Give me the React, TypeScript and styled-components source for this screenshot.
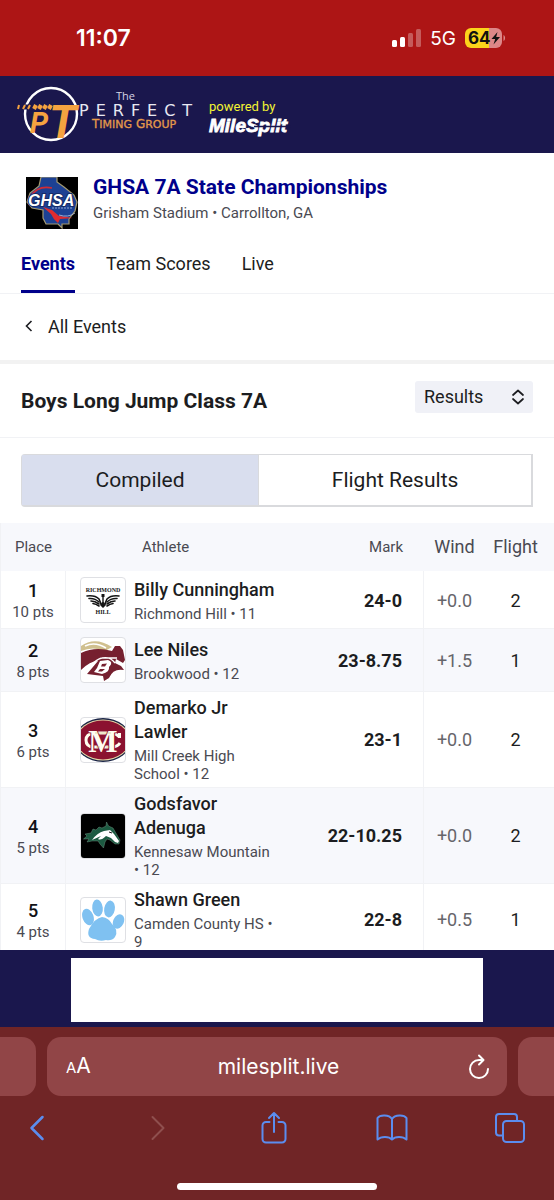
import React from 'react';
import styled, { createGlobalStyle, css } from 'styled-components';

const navy = '#1a174d';
const linkBlue = '#00008b';
const line = '#f1f2f5';
const muted = '#4a4a52';

const GlobalStyle = createGlobalStyle`
  * { box-sizing: border-box; }
  body { margin: 0; background: #fff; color: #1c1d21; font-family: Roboto, sans-serif; }
  button, select, input { font: inherit; color: inherit; margin: 0; border: 0; background: none; padding: 0; }
  a { color: inherit; text-decoration: none; }
  h1, h2, p { margin: 0; }
  svg { display: block; }
`;

const Shell = styled.div`
  height: 100vh;
  display: flex;
  flex-direction: column;
`;

const StatusBar = styled.div`
  flex: none;
  height: 76px;
  padding: 0 48px 0 76px;
  background: #ad1515;
  color: #fff;
  display: flex;
  align-items: center;
  justify-content: space-between;
  font-family: Inter, sans-serif;
`;

const Clock = styled.time`
  font-size: 23px;
  font-weight: 600;
`;

const StatusIcons = styled.div`
  display: flex;
  align-items: center;
  gap: 9px;
  font-size: 19px;
`;

const BrandBar = styled.header`
  flex: none;
  height: 77px;
  background: ${navy};
  display: flex;
  padding: 0 16px;
`;

const Main = styled.main`
  flex: 1;
  min-height: 0;
  overflow-y: auto;
  scrollbar-width: none;
`;

const MeetHeader = styled.section`
  display: flex;
  align-items: flex-start;
  gap: 15px;
  padding: 22px 26px 0;
  svg { margin-top: 2px; }
`;

const MeetTitle = styled.h1`
  font-size: 21px;
  line-height: 24px;
  font-weight: 700;
  color: ${linkBlue};
`;

const MeetPlace = styled.p`
  font-size: 15px;
  line-height: 20px;
  margin-top: 4px;
  color: ${muted};
`;

const Tabs = styled.nav`
  display: flex;
  gap: 31px;
  padding: 5px 21px 0;
  border-bottom: 1px solid ${line};
`;

const Tab = styled.a<{ $active?: boolean }>`
  font-size: 18px;
  line-height: 24px;
  padding: 18px 0 14px;
  border-bottom: 3px solid transparent;
  ${p => p.$active && css`
    color: ${linkBlue};
    font-weight: 700;
    border-color: ${linkBlue};
  `}
`;

const BackRow = styled.a`
  display: flex;
  align-items: center;
  gap: 14px;
  height: 70px;
  padding: 0 24px 2px;
  font-size: 18px;
  border-bottom: 4px solid #f2f2f2;
`;

const EventHeader = styled.section`
  display: flex;
  align-items: center;
  justify-content: space-between;
  height: 74px;
  padding: 0 21px;
  border-bottom: 1px solid ${line};
`;

const EventTitle = styled.h2`
  font-size: 21px;
  line-height: 24px;
  font-weight: 700;
`;

const SelectBox = styled.label`
  position: relative;
  display: flex;
  align-items: center;
  margin-bottom: 8px;
  svg { position: absolute; right: 8px; pointer-events: none; }
`;

const Select = styled.select`
  appearance: none;
  width: 118px;
  height: 32px;
  padding: 0 30px 1px 9px;
  border-radius: 3px;
  background: #f0f1f7;
  font-size: 18px;
`;

const Segmented = styled.div`
  display: flex;
  margin: 16px 21px;
  height: 53px;
  border: 1px solid #d9dadd;
  border-width: 1px 2px 2px 1px;
  border-radius: 4px 0 0 4px;
`;

const Segment = styled.button<{ $active?: boolean }>`
  flex: ${p => (p.$active ? '238 1 0' : '274 1 0')};
  font-size: 21px;
  line-height: 24px;
  cursor: pointer;
  background: ${p => (p.$active ? '#d9deee' : '#fff')};
  & + & { border-left: 1px solid #d9dadd; }
`;

const Table = styled.table`
  width: 100%;
  table-layout: fixed;
  border-collapse: separate;
  border-spacing: 0;
  border-left: 1px solid ${line};
`;

const Column = styled.col<{ $width?: number }>`
  width: ${p => (p.$width ? `${p.$width}px` : 'auto')};
`;

const HeadCell = styled.th<{ $align?: string; $size?: number; $left?: number; $right?: number }>`
  height: 48px;
  padding: 0 ${p => p.$right || 0}px 0 ${p => p.$left || 0}px;
  background: #f7f8fc;
  color: ${muted};
  font-weight: 400;
  font-size: ${p => p.$size || 15}px;
  line-height: 24px;
  text-align: ${p => p.$align || 'center'};
`;

const Row = styled.tr`
  &:nth-child(even) td { background: #f7f8fc; }
  &:first-child td { padding-top: 6px; padding-bottom: 5px; }
`;

const Cell = styled.td`
  padding: 4px 0;
  border-bottom: 1px solid ${line};
  vertical-align: middle;
  text-align: center;
  font-size: 18px;
`;

const PlaceCell = styled(Cell)`
  border-right: 1px solid ${line};
  line-height: 24px;
  font-weight: 500;
  color: #111216;
`;

const Points = styled.div`
  font-size: 15px;
  line-height: 18px;
  font-weight: 400;
  color: ${muted};
`;

const LogoCell = styled(Cell)`
  padding: 8px 8px 8px 14px;
`;

const LogoFrame = styled.div`
  width: 46px;
  height: 46px;
  border: 1px solid #dfe0e4;
  border-radius: 4px;
  overflow: hidden;
  background: #fff;
`;

const AthleteCell = styled(Cell)`
  text-align: left;
`;

const Name = styled.a`
  display: block;
  font-size: 18px;
  line-height: 24px;
  font-weight: 500;
`;

const School = styled.div`
  margin-top: 3px;
  font-size: 15px;
  line-height: 18px;
  color: ${muted};
`;

const MarkCell = styled(Cell)`
  padding-right: 21px;
  border-right: 1px solid ${line};
  text-align: right;
  font-weight: 700;
`;

const WindCell = styled(Cell)`
  color: #66666b;
`;

const FlightCell = styled(Cell)`
  padding-right: 8px;
`;

const AdBar = styled.aside`
  flex: none;
  display: flex;
  justify-content: center;
  padding: 8px 71px 5px;
  background: ${navy};
`;

const AdSlot = styled.div`
  flex: 1;
  height: 64px;
  background: #fff;
`;

const Chrome = styled.footer`
  flex: none;
  background: #702526;
  color: #fff;
  font-family: Inter, sans-serif;
  padding-bottom: 10px;
`;

const AddressRow = styled.div`
  display: flex;
  gap: 11px;
  padding-top: 10px;
`;

const SideTab = styled.div<{ $side: 'left' | 'right' }>`
  flex: none;
  width: 36px;
  height: 59px;
  background: #914547;
  border-radius: ${p => (p.$side === 'left' ? '0 14px 14px 0' : '14px 0 0 14px')};
`;

const AddressBar = styled.div`
  flex: 1;
  display: flex;
  align-items: center;
  justify-content: space-between;
  height: 59px;
  padding: 0 16px 0 19px;
  border-radius: 14px;
  background: #914547;
`;

const TextSizeButton = styled.button`
  width: 24px;
  font-size: 21px;
  line-height: 24px;
  white-space: nowrap;
  text-align: left;
  small { font-size: 15px; }
`;

const Address = styled.input`
  flex: 1;
  min-width: 0;
  text-align: center;
  font-size: 21px;
  outline: none;
`;

const IconButton = styled.button<{ $dim?: boolean }>`
  width: 32px;
  height: 36px;
  display: grid;
  place-items: center;
  color: ${p => (p.$dim ? '#8f4f4e' : '#5b8def')};
`;

const ReloadButton = styled(IconButton)`
  width: 24px;
  color: #fff;
`;

const Toolbar = styled.div`
  display: flex;
  justify-content: space-between;
  padding: 14px 28px 37px 21px;
`;

const HomeIndicator = styled.div`
  width: 36%;
  height: 7px;
  margin: 0 auto;
  border-radius: 4px;
  background: #fff;
`;

const Signal = () => (
  <svg width="29" height="18" viewBox="0 0 29 18" fill="#fff">
    <rect x="0" y="11" width="5" height="7" rx="1.5" />
    <rect x="8" y="8" width="5" height="10" rx="1.5" />
    <rect x="16" y="4" width="5" height="14" rx="1.5" opacity=".3" />
    <rect x="24" y="0" width="5" height="18" rx="1.5" opacity=".3" />
  </svg>
);

const Battery = () => (
  <svg width="41" height="20" viewBox="0 0 41 20">
    <path d="M6 0H24V20H6A6 6 0 0 1 0 14V6A6 6 0 0 1 6 0Z" fill="#fbd41b" />
    <path d="M24 0H31A6 6 0 0 1 37 6V14A6 6 0 0 1 31 20H24Z" fill="#dd8788" />
    <path d="M38.5 7C40.6 8 40.6 12 38.5 13Z" fill="#dd8788" />
    <text x="3" y="16" fontFamily="Inter, sans-serif" fontSize="17" fontWeight="700" fill="#111">64</text>
    <path d="M32.5 4L26.5 11H30.2L28.5 16.5L35 9H31.2Z" fill="#111" />
  </svg>
);

const BrandLogo = () => (
  <svg width="280" height="77" viewBox="0 0 280 77">
    <circle cx="35" cy="38" r="26" fill="none" stroke="#fff" strokeWidth="2.4" />
    <path d="M6 31H15" stroke={navy} strokeWidth="5" />
    <path d="M2 33L3 29M7 33L9 29M12 33L14 29" stroke="#f5a340" strokeWidth="2" />
    <path d="M18 33L20 29M23 33L25 29M28 33L30 29M33 33L35 29" stroke="#f5a340" strokeWidth="4" />
    <g fontFamily="Roboto, sans-serif" fontWeight="700" fontStyle="italic" fill="#f5a340">
      <text x="14" y="57" fontSize="29">P</text>
      <text x="33" y="62" fontSize="46">T</text>
    </g>
    <text x="100" y="24" fontFamily="'Open Sans', sans-serif" fontSize="11" fill="#d5d5e5">The</text>
    <text x="63" y="40" fontFamily="'DejaVu Sans', sans-serif" fontSize="16" letterSpacing="7" fill="#e8e8f2">PERFECT</text>
    <text x="76" y="52" fontFamily="'DejaVu Sans', sans-serif" fontSize="12" fill="#e59a4a" stroke="#e59a4a" strokeWidth=".3">
      T<tspan fontSize="11">IMING</tspan> G<tspan fontSize="11">ROUP</tspan>
    </text>
    <text x="193" y="35" fontFamily="Roboto, sans-serif" fontSize="13" fill="#f4f433">powered by</text>
    <text x="193" y="56" fontFamily="'Liberation Sans Narrow', 'Liberation Sans', sans-serif" fontSize="19" fontWeight="700" fontStyle="italic" fill="#fff" stroke="#fff" strokeWidth=".8">MileSplit</text>
    <path d="M238 50.5H275" stroke={navy} strokeWidth="1.3" />
  </svg>
);

const GhsaLogo = () => (
  <svg width="52" height="52" viewBox="0 0 52 52">
    <rect width="52" height="52" fill="#000" />
    <path d="M15 0H31L31 5L38 10L48 18L51 25L49 34L43 42V47H36V51L32 47H20L17 41V33L6 31L1 25L4 16L13 9Z" fill="#1d4193" stroke="#a49a72" strokeWidth="1.2" />
    <path d="M5 19Q12 8 26 11" fill="none" stroke="#d22c34" strokeWidth="1.6" />
    <path d="M17 30L26 33L33 39L47 41L34 42L32 46Q27 42 25 37Z" fill="#e02c30" />
    <path d="M33 38Q42 41 49 36" stroke="#b9c4df" fill="none" strokeWidth=".8" />
    <text x="2" y="29" fontFamily="'Liberation Sans', sans-serif" fontSize="16" fontWeight="700" fontStyle="italic" fill="#fff" stroke="#142a66" strokeWidth="2" paintOrder="stroke">GHSA</text>
    <path d="M26 31H46" stroke="#8fa4d0" strokeWidth="1" strokeDasharray="2 1" />
  </svg>
);

const RichmondLogo = () => (
  <svg width="44" height="44" viewBox="0 0 44 44" fill="#151515">
    <g fontFamily="'Liberation Serif', serif" fontWeight="700" textAnchor="middle">
      <text x="22" y="14" fontSize="6">RICHMOND</text>
      <text x="22" y="36" fontSize="6">HILL</text>
    </g>
    <g fill="none" stroke="#151515" strokeWidth="1.6" strokeLinecap="round">
      <path d="M6 18Q14 17 18 21Q19 23 20 26" />
      <path d="M8 20.5Q14 20 18 24" />
      <path d="M10 23Q14 23 18 26" />
      <path d="M12 25.5Q15 26 18 28" />
      <path d="M38 18Q30 17 26 21Q25 23 24 26" />
      <path d="M36 20.5Q30 20 26 24" />
      <path d="M34 23Q30 23 26 26" />
      <path d="M32 25.5Q29 26 26 28" />
    </g>
    <path d="M20.5 16H23.5V19H22.700V24L25 27L22 30L19 27L21.300 24V19H20.5Z" />
  </svg>
);

const BrookwoodLogo = () => (
  <svg width="44" height="44" viewBox="0 0 44 44">
    <path d="M0 8Q14-2 31 9L24 13Q12 8 0 13Z" fill="#d0c08f" />
    <path d="M4 8Q14 3 25 10" fill="none" stroke="#fff" strokeWidth="1.5" />
    <path d="M0 15Q14 8 31 13L34 8H39L42 12L44 22L42 25L35 21L34 25L40 28L43 32Q32 30 28 40L23 43L22 38L6 36L17 23Q9 23 0 32Z" fill="#76202f" />
    <path d="M3 36Q14 21 21 20L36 20M21 20Q29 18 34 25" fill="none" stroke="#fff" strokeWidth="1.3" />
    <path fillRule="evenodd" d="M13 34L16 30L19 23L27 22Q33 24 28 29Q29 34 21 36ZM21 26L20 28.5H24L26 25.5ZM19 31L17 33.500H21L24 31Z" fill="#fff" />
  </svg>
);

const MillCreekLogo = () => (
  <svg width="44" height="44" viewBox="0 0 44 44">
    <ellipse cx="22" cy="22" rx="28" ry="22" fill="#1b2547" />
    <ellipse cx="22" cy="22" rx="27" ry="20.5" fill="#e6d9a8" />
    <ellipse cx="22" cy="22" rx="26" ry="19.5" fill="#8b1230" />
    <path d="M38.5 15V20M38.500 19Q35 15 28 15H13Q5 16 5 22Q5 29 13 29H31Q37 28.500 39 25" fill="none" stroke="#fffdf0" strokeWidth="3" />
    <text x="22" y="34" fontSize="31" textAnchor="middle" fontFamily="'Liberation Serif', serif" fontWeight="700" fill="#fffdf0" stroke="#8b1230" strokeWidth="2" paintOrder="stroke">M</text>
    <path d="M14 15H30M15 29H19M25 29H29" stroke="#c9b876" strokeWidth=".6" />
  </svg>
);

const KennesawLogo = () => (
  <svg width="44" height="44" viewBox="0 0 44 44">
    <rect width="44" height="44" fill="#000" />
    <path d="M25.500 8L27.500 12L32 14L36 21L39 26L38 30L34 30L29 26L26 25L24 28L22.500 34L19 30L17 27L11 27L6 28L8 25L2.500 25L6 22L4 20L10 19L12 15L15 16L18 13L21 14L25 12Z" fill="#1c5a41" stroke="#7fa493" strokeWidth=".4" />
    <path d="M11 26Q16 19 23 17L29 16L33 20L38 27L37 29L34 28L30 24L25 22Q20 27 17 25L20 22Z" fill="#fff" />
    <path d="M28 18L31 19" stroke="#111" strokeWidth="1" />
  </svg>
);

const CamdenLogo = () => (
  <svg width="44" height="44" viewBox="0 0 44 44" fill="#7fc1f1">
    <ellipse cx="7" cy="19" rx="5.5" ry="8.5" transform="rotate(-20 7 19)" />
    <ellipse cx="16.5" cy="10" rx="5.3" ry="8.5" transform="rotate(-6 16.5 10)" />
    <ellipse cx="28.5" cy="11" rx="5.3" ry="8.5" transform="rotate(10 28.5 11)" />
    <ellipse cx="37.5" cy="23.5" rx="5.3" ry="7.5" transform="rotate(25 37.5 23.5)" />
    <path d="M21 19Q28 20 31 26Q38 32 34 39Q31 43 25 42Q19 44 14 41Q5 40 8 31Q14 20 21 19Z" />
  </svg>
);

const results = [
  { place: 1, pts: 10, name: 'Billy Cunningham', school: 'Richmond Hill • 11', mark: '24-0', wind: '+0.0', flight: 2, Logo: RichmondLogo },
  { place: 2, pts: 8, name: 'Lee Niles', school: 'Brookwood • 12', mark: '23-8.75', wind: '+1.5', flight: 1, Logo: BrookwoodLogo },
  { place: 3, pts: 6, name: 'Demarko Jr Lawler', school: 'Mill Creek High School • 12', mark: '23-1', wind: '+0.0', flight: 2, Logo: MillCreekLogo },
  { place: 4, pts: 5, name: 'Godsfavor Adenuga', school: 'Kennesaw Mountain • 12', mark: '22-10.25', wind: '+0.0', flight: 2, Logo: KennesawLogo },
  { place: 5, pts: 4, name: 'Shawn Green', school: 'Camden County HS • 9', mark: '22-8', wind: '+0.5', flight: 1, Logo: CamdenLogo },
];

const strokeProps = { fill: 'none', stroke: 'currentColor', strokeWidth: 2, strokeLinecap: 'round', strokeLinejoin: 'round' } as const;

export default function App() {
  return (
    <Shell>
      <GlobalStyle />
      <StatusBar>
        <Clock>11:07</Clock>
        <StatusIcons>
          <Signal />
          <span>5G</span>
          <Battery />
        </StatusIcons>
      </StatusBar>
      <BrandBar><BrandLogo /></BrandBar>
      <Main>
        <MeetHeader>
          <GhsaLogo />
          <div>
            <MeetTitle>GHSA 7A State Championships</MeetTitle>
            <MeetPlace>Grisham Stadium • Carrollton, GA</MeetPlace>
          </div>
        </MeetHeader>
        <Tabs>
          <Tab href="#events" $active>Events</Tab>
          <Tab href="#scores">Team Scores</Tab>
          <Tab href="#live">Live</Tab>
        </Tabs>
        <BackRow href="#all">
          <svg width="10" height="14" viewBox="0 0 10 14" {...strokeProps} strokeWidth={1.6} strokeLinecap="butt" strokeLinejoin="miter"><path d="M7.5 2L2.5 7L7.5 12" /></svg>
          All Events
        </BackRow>
        <EventHeader>
          <EventTitle>Boys Long Jump Class 7A</EventTitle>
          <SelectBox>
            <Select aria-label="View" defaultValue="Results">
              <option>Results</option>
            </Select>
            <svg width="14" height="16" viewBox="0 0 14 16" {...strokeProps} strokeWidth={1.7}><path d="M2 6L7 1.5L12 6M2 10L7 14.5L12 10" /></svg>
          </SelectBox>
        </EventHeader>
        <Segmented>
          <Segment $active>Compiled</Segment>
          <Segment>Flight Results</Segment>
        </Segmented>
        <Table>
          <colgroup>
            <Column $width={65} />
            <Column $width={68} />
            <Column $width={143} />
            <Column />
            <Column $width={61} />
            <Column $width={69} />
          </colgroup>
          <thead>
            <tr>
              <HeadCell>Place</HeadCell>
              <HeadCell colSpan={2} $align="left" $left={76}>Athlete</HeadCell>
              <HeadCell $align="right" $right={21}>Mark</HeadCell>
              <HeadCell $size={18}>Wind</HeadCell>
              <HeadCell $size={18} $right={8}>Flight</HeadCell>
            </tr>
          </thead>
          <tbody>
            {results.map(({ Logo, ...r }) => (
              <Row key={r.place}>
                <PlaceCell>{r.place}<Points>{r.pts} pts</Points></PlaceCell>
                <LogoCell><LogoFrame><Logo /></LogoFrame></LogoCell>
                <AthleteCell>
                  <Name href="#athlete">{r.name}</Name>
                  <School>{r.school}</School>
                </AthleteCell>
                <MarkCell>{r.mark}</MarkCell>
                <WindCell>{r.wind}</WindCell>
                <FlightCell>{r.flight}</FlightCell>
              </Row>
            ))}
          </tbody>
        </Table>
      </Main>
      <AdBar><AdSlot /></AdBar>
      <Chrome>
        <AddressRow>
          <SideTab $side="left" />
          <AddressBar>
            <TextSizeButton aria-label="Page settings"><small>A</small>A</TextSizeButton>
            <Address aria-label="Address" defaultValue="milesplit.live" />
            <ReloadButton aria-label="Reload">
              <svg width="22" height="26" viewBox="0 0 22 26" {...strokeProps}><path d="M20 15A9 9 0 1 1 11 6H14M11 1.5L15.5 6L11 10.5" /></svg>
            </ReloadButton>
          </AddressBar>
          <SideTab $side="right" />
        </AddressRow>
        <Toolbar>
          <IconButton aria-label="Back">
            <svg width="16" height="26" viewBox="0 0 16 26" {...strokeProps} strokeWidth={2.5}><path d="M13.5 2L2.5 13L13.5 24" /></svg>
          </IconButton>
          <IconButton aria-label="Forward" $dim>
            <svg width="20" height="26" viewBox="0 0 20 26" {...strokeProps}><path d="M7.5 2L18.5 13L7.5 24" /></svg>
          </IconButton>
          <IconButton aria-label="Share">
            <svg width="26" height="34" viewBox="0 0 26 34" {...strokeProps}><path d="M8.5 11H5A3.5 3.5 0 0 0 1.5 14.5V28A3.5 3.5 0 0 0 5 31.5H21A3.5 3.5 0 0 0 24.5 28V14.5A3.5 3.5 0 0 0 21 11H17.5M13 21V2M8 7L13 2L18 7" /></svg>
          </IconButton>
          <IconButton aria-label="Bookmarks">
            <svg width="32" height="28" viewBox="0 0 32 28" {...strokeProps}><path d="M16 5C13 .5 4 .5 1.5 4V25.5C5 22 13 22 16 25.5C19 22 27 22 30.5 25.5V4C28 .5 19 .5 16 5V25" /></svg>
          </IconButton>
          <IconButton aria-label="Tabs">
            <svg width="32" height="32" viewBox="0 0 32 32" {...strokeProps}><rect x="9" y="9" width="21" height="21" rx="3.5" /><path d="M9 23.5H5A3 3 0 0 1 2 20.5V5A3 3 0 0 1 5 2H20A3 3 0 0 1 23 5V9" /></svg>
          </IconButton>
        </Toolbar>
        <HomeIndicator />
      </Chrome>
    </Shell>
  );
}
